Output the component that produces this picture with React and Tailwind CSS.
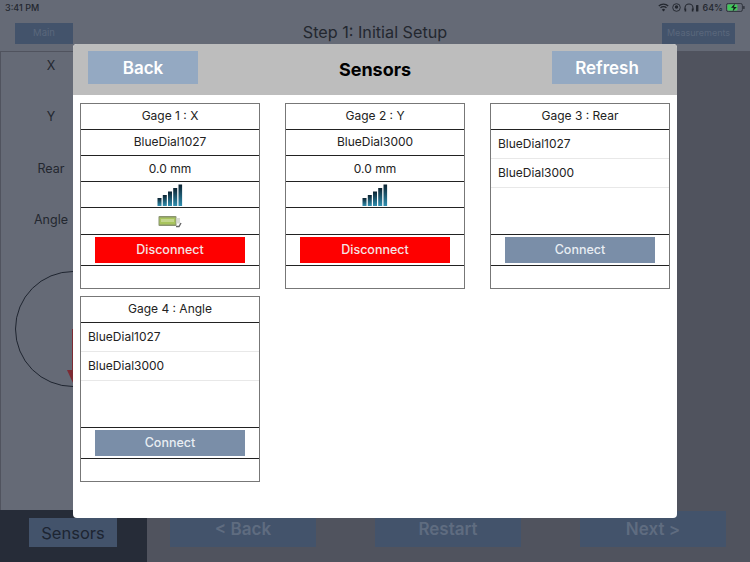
const font = { fontFamily: "Inter, 'Liberation Sans', sans-serif" };

function SignalBars() {
  return (
    <svg width="26" height="22" viewBox="0 0 26 22">
      <defs>
        <linearGradient id="bar" x1="0" y1="0" x2="0" y2="1">
          <stop offset="0" stopColor="#0b2230" />
          <stop offset="1" stopColor="#2f8fb0" />
        </linearGradient>
      </defs>
      <rect x="0.5" y="14" width="4" height="8" fill="url(#bar)" />
      <rect x="5.8" y="11" width="4" height="11" fill="url(#bar)" />
      <rect x="11" y="7.5" width="4" height="14.5" fill="url(#bar)" />
      <rect x="16.2" y="4" width="4" height="18" fill="url(#bar)" />
      <rect x="21.5" y="0.5" width="3.6" height="21.5" fill="url(#bar)" />
    </svg>
  );
}

function BatteryIcon() {
  return (
    <svg width="24" height="13" viewBox="0 0 24 13">
      <rect x="0.5" y="1" width="18" height="10" rx="1" fill="#8a9470" />
      <rect x="1.5" y="2.5" width="16" height="7" fill="#a8c45c" />
      <rect x="3" y="4" width="13" height="3" fill="#c3d68c" />
      <rect x="18.5" y="3" width="3.5" height="5.5" fill="#d8dad4" />
      <path d="M18 11.5h3l2-3.5" fill="none" stroke="#666" strokeWidth="1.4" />
    </svg>
  );
}

function Row({ h, children, className = "" }) {
  return (
    <div className={`${h} ${className} flex items-center justify-center border-b border-[#222] text-[12px] text-[#222]`}>
      {children}
    </div>
  );
}

function GageCard({ title, sensor, connected, showBattery }) {
  return (
    <div className="flex h-[186px] flex-col border border-[#777]">
      <Row h="h-[26px] shrink-0" className="pb-px">{title}</Row>
      {connected ? (
        <>
          <Row h="h-[26px] shrink-0" className="pb-px">{sensor}</Row>
          <Row h="h-[26px] shrink-0">0.0 mm</Row>
          <Row h="h-[26px] shrink-0"><SignalBars /></Row>
          <Row h="h-[27px] shrink-0">{showBattery && <BatteryIcon />}</Row>
        </>
      ) : (
        <div className="flex h-[105px] shrink-0 flex-col border-b border-[#222] text-[12px] text-[#222]">
          <div className="flex h-[29px] items-center border-b border-[#e8e8e8] pb-px pl-[7px]">BlueDial1027</div>
          <div className="flex h-[29px] items-center border-b border-[#e8e8e8] pl-[7px]">BlueDial3000</div>
        </div>
      )}
      <div className="flex h-[31px] shrink-0 items-center justify-center border-b border-[#222]">
        <button
          className={`h-[26px] w-[150px] text-[12.5px] font-medium ${
            connected ? "bg-[#fe0000] text-[#f4e4e4]" : "bg-[#7a8ea8] text-[#e8edf3]"
          }`}
        >
          {connected ? "Disconnect" : "Connect"}
        </button>
      </div>
      <div className="flex-1" />
    </div>
  );
}

export default function App() {
  return (
    <div className="relative flex h-[562px] w-[750px] flex-col overflow-hidden bg-[#50535e]" style={font}>
      {/* Top bar */}
      <div className="h-[51px] shrink-0 bg-[#656a76]">
        <div className="flex h-[15px] items-center justify-between pl-[5px] pr-[5px] text-[9px] font-medium text-[#23272f]">
          <span>3:41 PM</span>
          <div className="flex items-center gap-[3px]">
            <svg width="11" height="9" viewBox="0 0 11 9" fill="none" stroke="#23272f" strokeWidth="1.3">
              <path d="M0.8 3a6.8 6.8 0 0 1 9.4 0M2.5 4.9a4.2 4.2 0 0 1 6 0" />
              <path d="M5.5 8.6 3.9 6.7a2.2 2.2 0 0 1 3.2 0z" fill="#23272f" stroke="none" />
            </svg>
            <svg width="9" height="9" viewBox="0 0 9 9" fill="none" stroke="#23272f" strokeWidth="0.9">
              <circle cx="4.5" cy="4.5" r="3.8" />
              <circle cx="4.5" cy="4" r="1.7" fill="#23272f" stroke="none" />
            </svg>
            <svg width="15" height="9" viewBox="0 0 15 9" fill="none" stroke="#23272f" strokeWidth="1.1">
              <path d="M1 7V5a4 4 0 0 1 8 0v2" />
              <rect x="0.6" y="5.5" width="1.6" height="3" fill="#23272f" stroke="none" />
              <rect x="7.8" y="5.5" width="1.6" height="3" fill="#23272f" stroke="none" />
              <rect x="12" y="2" width="2.4" height="6.5" rx="0.6" fill="#23272f" stroke="none" />
            </svg>
            <span>64%</span>
            <svg width="19" height="9" viewBox="0 0 19 9">
              <rect x="0.4" y="0.4" width="16" height="8.2" rx="2" fill="none" stroke="#23272f" strokeWidth="0.8" />
              <rect x="1.4" y="1.4" width="10" height="6.2" rx="1" fill="#42c95a" />
              <path d="M9 0.5 5 4.8h2.6l-1 3.7 4.2-4.6H8z" fill="#16191f" />
              <rect x="17.3" y="3" width="1.2" height="3" rx="0.5" fill="#23272f" />
            </svg>
          </div>
        </div>
        <div className="grid h-[36px] grid-cols-[1fr_auto_1fr] items-center px-[15px]">
          <div className="flex h-[21px] w-[58px] items-center justify-center bg-[#43536b] text-[9.5px] text-[#5a677c]">Main</div>
          <div className="-mt-px text-[16.2px] text-[#23272f]">Step 1: Initial Setup</div>
          <div className="flex h-[21px] w-[73px] items-center justify-center justify-self-end bg-[#43536b] text-[9px] text-[#5a677c]">Measurements</div>
        </div>
      </div>

      {/* Main area */}
      <div className="flex flex-1">
        <div className="w-[147px] border-l border-t border-[#50535e] bg-[#656a76] text-[12.5px] text-[#23272f]">
          <div className="h-[51.5px] w-[100px] pt-[4.5px] text-center">X</div>
          <div className="h-[51.5px] w-[100px] pt-[4.5px] text-center">Y</div>
          <div className="h-[51.5px] w-[100px] pt-[4.5px] text-center">Rear</div>
          <div className="h-[51.5px] w-[100px] pt-[4.5px] text-center">Angle</div>
          <div className="relative ml-[14px] mt-[13px] h-[116px] w-[116px] rounded-full border border-[#1f2530]">
            <svg className="absolute left-[50px] top-[57px]" width="14" height="60" viewBox="0 0 14 60">
              <path d="M7 0v50" stroke="#7d2b34" strokeWidth="2" />
              <path d="M1 41h12l-6 13z" fill="#7d2b34" />
            </svg>
          </div>
        </div>
        <div className="flex-1" />
      </div>

      {/* Bottom bar */}
      <div className="flex h-[52px] shrink-0">
        <div className="flex w-[147px] items-start justify-center bg-[#262c38] pt-[8px] pr-[1px]">
          <div className="flex h-[29px] w-[88px] items-center justify-center bg-[#43536b] pt-[2px] text-[16.5px] text-[#1d2532]">Sensors</div>
        </div>
        <div className="flex flex-1 items-start gap-[59px] pl-[23px] pt-px text-[17px] font-semibold text-[#5f6c80]">
          <div className="flex h-[36px] w-[146px] items-center justify-center bg-[#43536b] pt-[2px]">&lt; Back</div>
          <div className="flex h-[36px] w-[146px] items-center justify-center bg-[#43536b] pt-[2px]">Restart</div>
          <div className="flex h-[36px] w-[146px] items-center justify-center bg-[#43536b] pt-[2px]">Next &gt;</div>
        </div>
      </div>

      {/* Sensors modal */}
      <div className="absolute left-[73px] top-[44px] h-[474px] w-[604px] overflow-hidden rounded-[4px] bg-white">
        <div className="flex h-[51px] items-start justify-between bg-[#bdbdbd] px-[15px] pt-[7px]">
          <button className="h-[33px] w-[110px] bg-[#94a9c2] pt-[2px] text-[17px] font-semibold text-white">Back</button>
          <div className="text-[18px] font-bold leading-[38px] text-black">Sensors</div>
          <button className="h-[33px] w-[110px] bg-[#94a9c2] pt-[2px] text-[17px] font-semibold text-white">Refresh</button>
        </div>
        <div className="grid grid-cols-[180px_180px_180px] gap-x-[25px] gap-y-[7px] pl-[7px] pt-[8px]">
          <GageCard title="Gage 1 : X" sensor="BlueDial1027" connected showBattery />
          <GageCard title="Gage 2 : Y" sensor="BlueDial3000" connected />
          <GageCard title="Gage 3 : Rear" />
          <GageCard title="Gage 4 : Angle" />
        </div>
      </div>
    </div>
  );
}
